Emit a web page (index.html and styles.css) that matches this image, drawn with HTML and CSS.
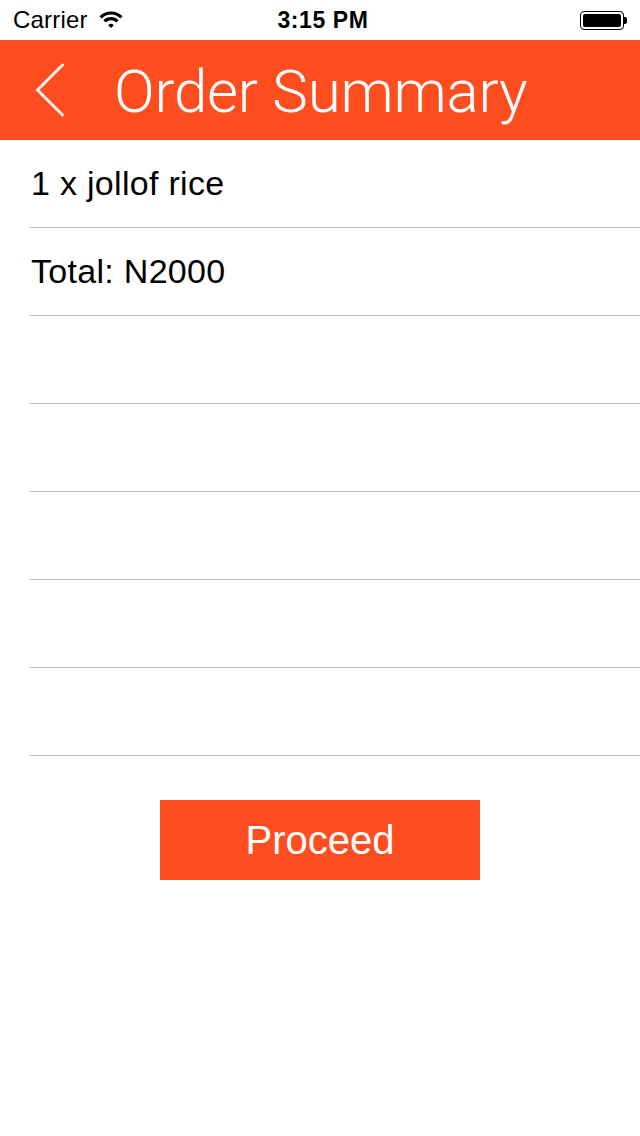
FILE: index.html
```html
<!DOCTYPE html>
<html>
<head>
<meta charset="utf-8">
<link rel="stylesheet" href="styles.css">
</head>
<body>
<div class="statusbar">
  <div class="sb-left">
    <span class="carrier">Carrier</span>
    <svg class="wifi" width="26" height="19" viewBox="0 0 26 19">
      <path d="M2.6 7.4 A14.5 14.5 0 0 1 23.4 7.4" fill="none" stroke="#000" stroke-width="3.2"/>
      <path d="M6.6 11.4 A8.8 8.8 0 0 1 19.4 11.4" fill="none" stroke="#000" stroke-width="3.2"/>
      <path d="M13 18 L10.2 15.2 A4 4 0 0 1 15.8 15.2 Z" fill="#000"/>
    </svg>
  </div>
  <div class="time">3:15 PM</div>
  <div class="sb-right">
    <div class="battery"><div class="battery-fill"></div></div>
    <div class="battery-nub"></div>
  </div>
</div>
<header class="navbar">
  <svg class="back" width="32" height="56" viewBox="0 0 32 56">
    <polyline points="28.5,3 3.5,28 28.5,53" fill="none" stroke="#fff" stroke-width="3" stroke-linecap="round" stroke-linejoin="round" opacity="0.92"/>
  </svg>
  <h1 class="title">Order Summary</h1>
</header>
<ul class="list">
  <li class="row">1 x jollof rice</li>
  <li class="row">Total: N2000</li>
  <li class="row"></li>
  <li class="row"></li>
  <li class="row"></li>
  <li class="row"></li>
  <li class="row"></li>
</ul>
<div class="actions">
  <button class="proceed">Proceed</button>
</div>
</body>
</html>
```
FILE: styles.css
```css
* { box-sizing: border-box; }
html, body {
  margin: 0;
  padding: 0;
  background: #fff;
  width: 640px;
  font-family: "Liberation Sans", Arial, sans-serif;
}
.statusbar {
  height: 40px;
  display: flex;
  align-items: center;
  justify-content: space-between;
  padding: 0 13px 0 13px;
}
.sb-left {
  display: flex;
  align-items: center;
  gap: 10px;
  width: 200px;
}
.carrier {
  font-size: 24px;
  color: #000;
  letter-spacing: 0.2px;
}
.wifi { margin-top: -2px; }
.time {
  font-size: 23px;
  font-weight: bold;
  color: #000;
  letter-spacing: 0.6px;
  margin-left: 6px;
}
.sb-right {
  width: 200px;
  display: flex;
  justify-content: flex-end;
  align-items: center;
}
.battery {
  width: 44px;
  height: 19px;
  border: 1.5px solid #000;
  border-radius: 4px;
  padding: 2px;
}
.battery-fill {
  width: 100%;
  height: 100%;
  background: #000;
  border-radius: 2px;
}
.battery-nub {
  width: 3px;
  height: 7px;
  background: #000;
  border-radius: 0 2px 2px 0;
}
.navbar {
  height: 100px;
  background: #FE4E1F;
  display: flex;
  align-items: center;
  padding-left: 34px;
}
.back { display: block; }
.title {
  margin: 4px 0 0 48px;
  font-family: Roboto, "Liberation Sans", sans-serif;
  font-weight: 300;
  font-size: 60px;
  color: #fff;
  line-height: 1;
  letter-spacing: -0.2px;
}
.list {
  list-style: none;
  margin: 0;
  padding: 0 0 0 30px;
}
.row {
  height: 88px;
  border-bottom: 1px solid #bdbdbd;
  display: flex;
  align-items: center;
  padding-left: 1px;
  font-size: 34px;
  letter-spacing: 0.3px;
  color: #000;
}
.actions {
  display: flex;
  justify-content: center;
  padding-top: 44px;
}
.proceed {
  width: 320px;
  height: 80px;
  background: #FE4E1F;
  border: none;
  border-radius: 0;
  color: #fff;
  font-family: "Liberation Sans", Arial, sans-serif;
  font-size: 40px;
  padding: 0;
}
```
